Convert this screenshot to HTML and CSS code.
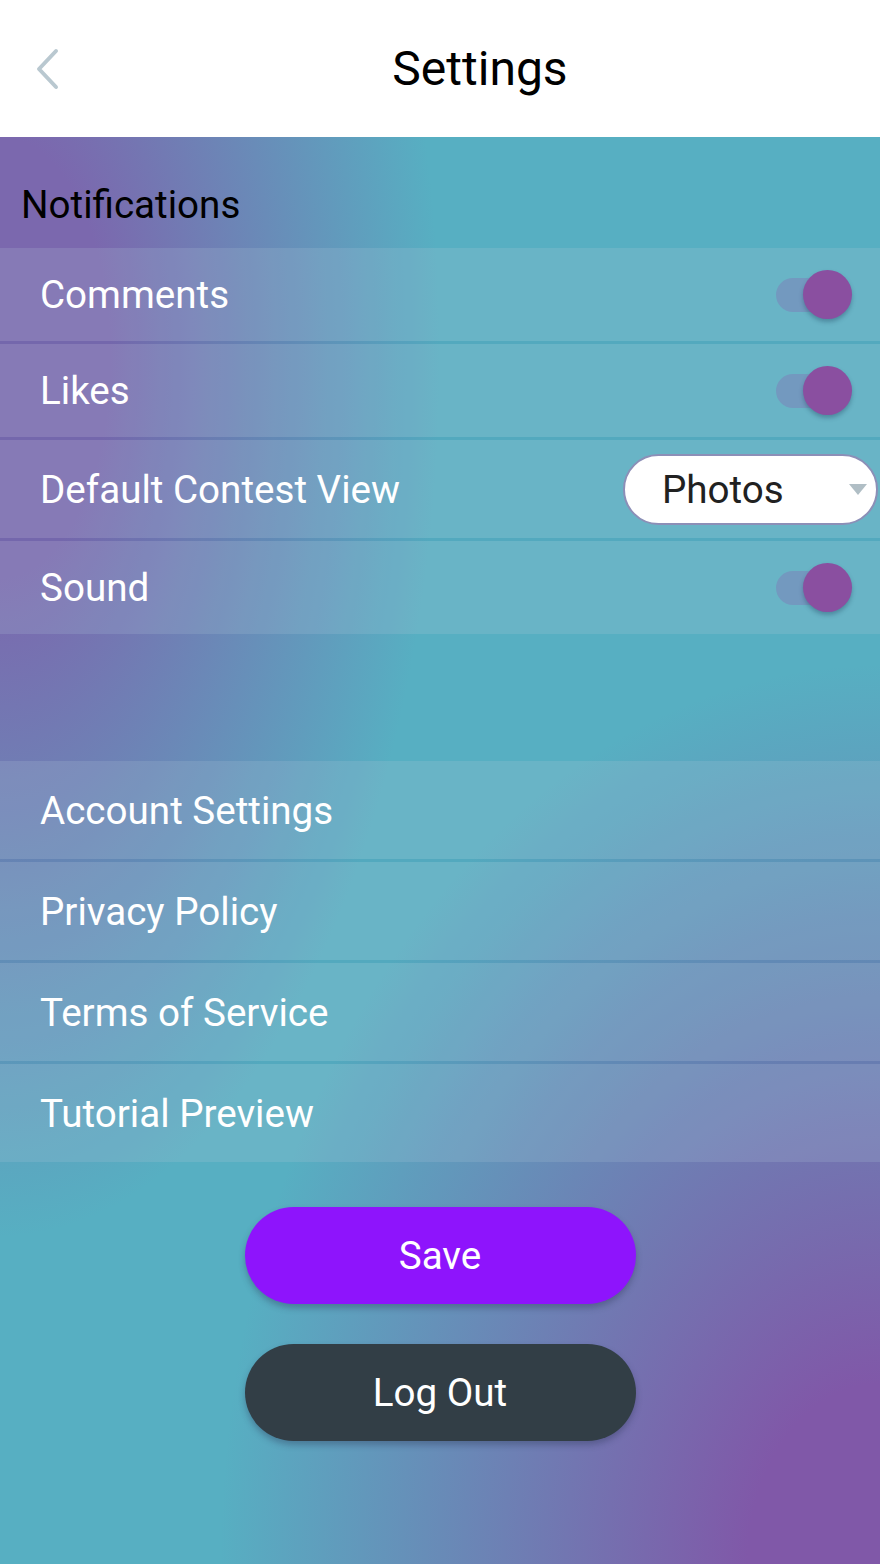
FILE: index.html
```html
<!DOCTYPE html>
<html lang="en">
<head>
    <meta charset="UTF-8">
    <title>Settings</title>
    <link rel="stylesheet" href="styles.css">
</head>
<body>
<div class="header">
    <a class="back" href="javascript:;">
        <svg width="30" height="44" viewBox="0 0 30 44">
            <polyline points="22,4 5,22 22,40" fill="none" stroke="#b9c8d0" stroke-width="4" stroke-linecap="round" stroke-linejoin="round"/>
        </svg>
    </a>
    <h1>Settings</h1>
</div>

<div class="page">
    <div class="section_title">Notifications</div>
    <div class="group">
        <div class="row">
            <span>Comments</span>
            <div class="toggle"><div class="thumb"></div></div>
        </div>
        <div class="row">
            <span>Likes</span>
            <div class="toggle"><div class="thumb"></div></div>
        </div>
        <div class="row row_select">
            <span>Default Contest View</span>
            <div class="select">
                <span>Photos</span>
                <i class="arrow"></i>
            </div>
        </div>
        <div class="row">
            <span>Sound</span>
            <div class="toggle"><div class="thumb"></div></div>
        </div>
    </div>

    <div class="group group_links">
        <a class="row" href="javascript:;">Account Settings</a>
        <a class="row" href="javascript:;">Privacy Policy</a>
        <a class="row" href="javascript:;">Terms of Service</a>
        <a class="row" href="javascript:;">Tutorial Preview</a>
    </div>

    <div class="buttons">
        <button class="btn btn_save">Save</button>
        <button class="btn btn_logout">Log Out</button>
    </div>
</div>
</body>
</html>
```

FILE: styles.css
```css
body{
    margin: 0;
    width: 880px;
    height: 1564px;
    font-family: Roboto, "Liberation Sans", sans-serif;
    overflow: hidden;
}
.header{
    position: relative;
    height: 137px;
    box-sizing: border-box;
    padding-left: 80px;
    background-color: #fff;
    display: flex;
    justify-content: center;
    align-items: center;
}
.header h1{
    margin: 0;
    font-size: 48px;
    font-weight: 400;
    color: #000;
}
.back{
    position: absolute;
    left: 34px;
    top: 47px;
}
.page{
    height: 1427px;
    background:
        radial-gradient(ellipse 440px 880px at 0 220px, rgba(123,104,174,1) 25%, rgba(123,104,174,0) 100%),
        radial-gradient(ellipse 660px 900px at 100% 100%, rgba(128,88,168,1) 20%, rgba(128,88,168,0) 100%),
        #57afc2;
}
.section_title{
    height: 111px;
    box-sizing: border-box;
    padding: 45px 0 0 21px;
    font-size: 38.6px;
    color: #000;
}
.group{
    display: flex;
    flex-direction: column;
    gap: 3px;
    background-color: rgba(40,100,150,0.08);
}
.row{
    height: 93px;
    display: flex;
    align-items: center;
    justify-content: space-between;
    padding: 0 40px 0 40px;
    background-color: rgba(255,255,255,0.13);
    font-size: 38.6px;
    color: #fff;
    text-decoration: none;
}
.row_select{
    height: 98px;
    padding-right: 2px;
}
.group_links{
    margin-top: 127px;
}
.group_links .row{
    height: 98px;
}
.toggle{
    position: relative;
    width: 64px;
    height: 34px;
    border-radius: 17px;
    background-color: #7399bf;
}
.thumb{
    position: absolute;
    right: -12px;
    top: -8px;
    width: 49px;
    height: 49px;
    border-radius: 50%;
    background-color: #8a4fa0;
    box-shadow: 0 3px 4px rgba(30,60,90,0.35);
}
.select{
    position: relative;
    width: 251px;
    height: 67px;
    border: 2px solid #8c8fb7;
    border-radius: 36px;
    background-color: #fff;
    display: flex;
    align-items: center;
}
.select span{
    margin-left: 37px;
    color: #212121;
    font-size: 38.6px;
}
.arrow{
    position: absolute;
    right: 9px;
    top: 28px;
    width: 0;
    height: 0;
    border-left: 9px solid transparent;
    border-right: 9px solid transparent;
    border-top: 11px solid #b0bec5;
}
.buttons{
    display: flex;
    flex-direction: column;
    align-items: center;
    gap: 40px;
    margin-top: 45px;
}
.btn{
    width: 391px;
    height: 97px;
    border: none;
    border-radius: 49px;
    font-family: Roboto, "Liberation Sans", sans-serif;
    font-size: 38.6px;
    color: #fff;
    box-shadow: 0 4px 6px rgba(40,50,80,0.35);
}
.btn_save{
    background-color: #8e14fc;
}
.btn_logout{
    background-color: #323e46;
}
```
